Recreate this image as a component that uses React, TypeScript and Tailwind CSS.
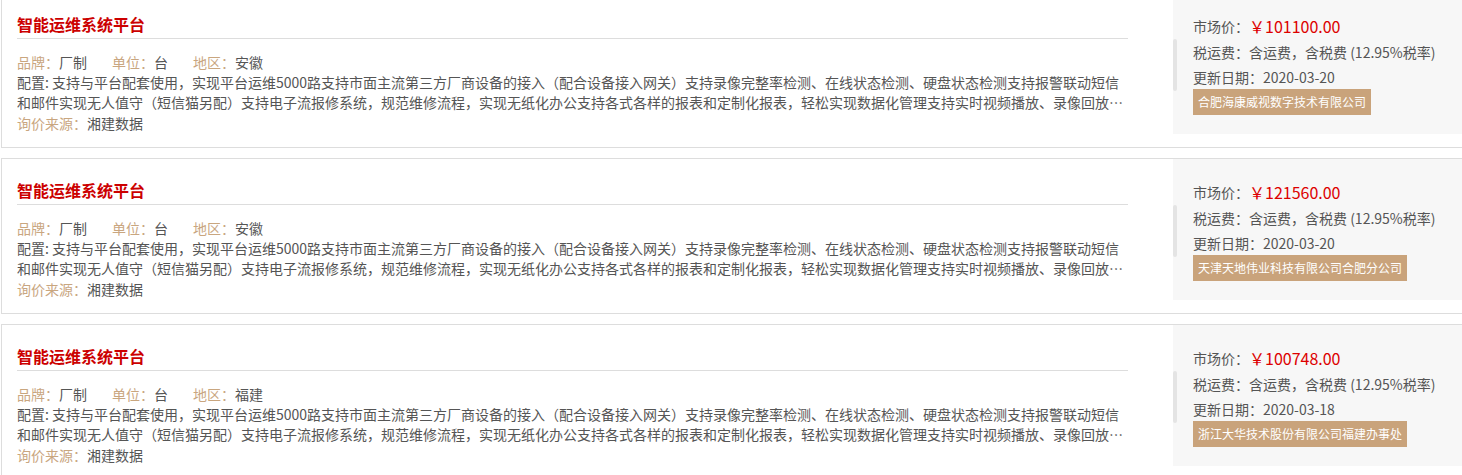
import React, { FC } from 'react';

interface Item {
  brand: string;
  unit: string;
  region: string;
  price: string;
  date: string;
  company: string;
}

const items: Item[] = [
  { brand: '厂制', unit: '台', region: '安徽', price: '101100.00', date: '2020-03-20', company: '合肥海康威视数字技术有限公司' },
  { brand: '厂制', unit: '台', region: '安徽', price: '121560.00', date: '2020-03-20', company: '天津天地伟业科技有限公司合肥分公司' },
  { brand: '厂制', unit: '台', region: '福建', price: '100748.00', date: '2020-03-18', company: '浙江大华技术股份有限公司福建办事处' },
];

const config =
  '支持与平台配套使用，实现平台运维5000路支持市面主流第三方厂商设备的接入（配合设备接入网关）支持录像完整率检测、在线状态检测、硬盘状态检测支持报警联动短信和邮件实现无人值守（短信猫另配）支持电子流报修系统，规范维修流程，实现无纸化办公支持各式各样的报表和定制化报表，轻松实现数据化管理支持实时视频播放、录像回放、云台控制、远程配置、设备巡检等功能';

const ProductCard: FC<{ item: Item }> = ({ item }) => {
  return (
    <div className="flex h-[156px] border border-[#dddddd] bg-white">
      {/* Left: product info */}
      <div className="w-[1171px] shrink-0 pl-[15px] pr-[45px]">
        <div className="border-b border-[#dddddd] pt-[19px] pb-[2px]">
          <h3 className="text-[16px] leading-[24px] font-bold text-[#cc0000]">智能运维系统平台</h3>
        </div>
        <div className="mt-[13px] flex text-[14px] leading-[20px]">
          <span className="mr-[25px]">
            <span className="text-[#c9a67f]">品牌：</span>
            <span className="text-[#555555]">{item.brand}</span>
          </span>
          <span className="mr-[25px]">
            <span className="text-[#c9a67f]">单位：</span>
            <span className="text-[#555555]">{item.unit}</span>
          </span>
          <span>
            <span className="text-[#c9a67f]">地区：</span>
            <span className="text-[#555555]">{item.region}</span>
          </span>
        </div>
        <p className="line-clamp-2 text-[14px] leading-[20px] text-[#555555]">配置: {config}</p>
        <div className="mt-px text-[14px] leading-[20px]">
          <span className="text-[#c9a67f]">询价来源：</span>
          <span className="text-[#555555]">湘建数据</span>
        </div>
      </div>

      {/* Right: price panel */}
      <div className="relative h-[141px] flex-1 bg-[#f7f7f7] pl-[20px] pt-[20px] text-[14px] text-[#555555]">
        <div className="absolute left-0 top-[46px] h-[52px] w-[4px] rounded-sm bg-[#e4e4e4]" />
        <div className="flex items-center leading-[26px]">
          <span>市场价：</span>
          <span className="text-[16px] text-[#dd0000]">￥{item.price}</span>
        </div>
        <div className="leading-[26px]">税运费：含运费，含税费 (12.95%税率)</div>
        <div className="leading-[24px]">更新日期：{item.date}</div>
        <div className="inline-block h-[26px] bg-[#c9a37b] px-[5px] text-[12px] leading-[26px] text-white">
          {item.company}
        </div>
      </div>
    </div>
  );
};

const App: FC = () => {
  return (
    <div
      className="h-[475px] w-[1462px] overflow-hidden bg-white"
      style={{ fontFamily: '"Noto Sans CJK SC", "Noto Sans", sans-serif' }}
    >
      <div className="-mt-[8px] ml-px flex w-[1480px] flex-col gap-[10px]">
        {items.map((item, index) => (
          <ProductCard key={index} item={item} />
        ))}
      </div>
    </div>
  );
};

export default App;
